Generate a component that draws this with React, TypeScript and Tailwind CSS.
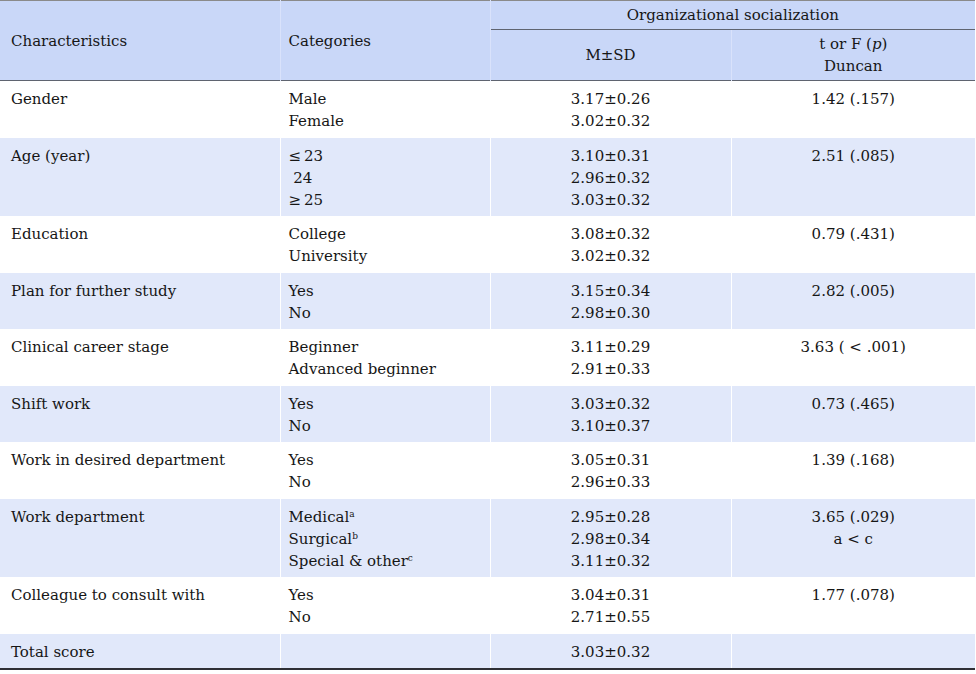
import React from 'react';

type Row = {
  label: string;
  cats: React.ReactNode[];
  means: string[];
  stat: string[];
};

const rows: Row[] = [
  { label: 'Gender', cats: ['Male', 'Female'], means: ['3.17±0.26', '3.02±0.32'], stat: ['1.42 (.157)'] },
  {
    label: 'Age (year)',
    cats: ['≤\u200923', '\u00a024', '≥\u200925'],
    means: ['3.10±0.31', '2.96±0.32', '3.03±0.32'],
    stat: ['2.51 (.085)'],
  },
  { label: 'Education', cats: ['College', 'University'], means: ['3.08±0.32', '3.02±0.32'], stat: ['0.79 (.431)'] },
  { label: 'Plan for further study', cats: ['Yes', 'No'], means: ['3.15±0.34', '2.98±0.30'], stat: ['2.82 (.005)'] },
  {
    label: 'Clinical career stage',
    cats: ['Beginner', 'Advanced beginner'],
    means: ['3.11±0.29', '2.91±0.33'],
    stat: ['3.63 ( < .001)'],
  },
  { label: 'Shift work', cats: ['Yes', 'No'], means: ['3.03±0.32', '3.10±0.37'], stat: ['0.73 (.465)'] },
  { label: 'Work in desired department', cats: ['Yes', 'No'], means: ['3.05±0.31', '2.96±0.33'], stat: ['1.39 (.168)'] },
  {
    label: 'Work department',
    cats: [
      <>Medical<sup className="text-[9px]">a</sup></>,
      <>Surgical<sup className="text-[9px]">b</sup></>,
      <>Special &amp; other<sup className="text-[9px]">c</sup></>,
    ],
    means: ['2.95±0.28', '2.98±0.34', '3.11±0.32'],
    stat: ['3.65 (.029)', 'a < c'],
  },
  { label: 'Colleague to consult with', cats: ['Yes', 'No'], means: ['3.04±0.31', '2.71±0.55'], stat: ['1.77 (.078)'] },
  { label: 'Total score', cats: [], means: ['3.03±0.32'], stat: [] },
];

export default function App() {
  return (
    <div className="w-[976px] h-[674px] bg-white text-[#161616] font-['DejaVu_Serif',serif] text-[15px] leading-[22px]">
      <table className="w-[975px] table-fixed border-collapse">
        <colgroup>
          <col className="w-[280px]" />
          <col className="w-[210px]" />
          <col className="w-[241px]" />
          <col className="w-[244px]" />
        </colgroup>
        <thead className="bg-[#c9d7f8]">
          <tr className="h-[29px] border-t border-[#8a8a8a]">
            <th rowSpan={2} className="border-r border-[#d9e2fb] pl-[11px] text-left font-normal align-middle">
              Characteristics
            </th>
            <th rowSpan={2} className="border-r border-[#d9e2fb] pl-[8px] text-left font-normal align-middle">
              Categories
            </th>
            <th colSpan={2} className="border-b border-[#5f6470] text-center font-normal">
              Organizational socialization
            </th>
          </tr>
          <tr className="h-[51px] border-b border-[#5f6470]">
            <th className="border-r border-[#d9e2fb] text-center font-normal align-middle">M±SD</th>
            <th className="text-center font-normal align-middle">
              t or F (<i>p</i>)
              <br />
              Duncan
            </th>
          </tr>
        </thead>
        <tbody className="border-b-2 border-[#2f2f35]">
          {rows.map((r, i) => (
            <tr key={r.label} className={i % 2 === 1 ? 'bg-[#e1e8fa]' : 'bg-white'}>
              <td className="border-r border-white pl-[11px] pt-[7px] pb-[5.5px] align-top">{r.label}</td>
              <td className="border-r border-white pl-[8px] pt-[7px] pb-[5.5px] align-top">
                {r.cats.map((c, j) => (
                  <div key={j}>{c}</div>
                ))}
              </td>
              <td className="border-r border-white pt-[7px] pb-[5.5px] text-center align-top">
                {r.means.map((m) => (
                  <div key={m}>{m}</div>
                ))}
              </td>
              <td className="pt-[7px] pb-[5.5px] text-center align-top">
                {r.stat.map((s) => (
                  <div key={s}>{s}</div>
                ))}
              </td>
            </tr>
          ))}
        </tbody>
      </table>
    </div>
  );
}
